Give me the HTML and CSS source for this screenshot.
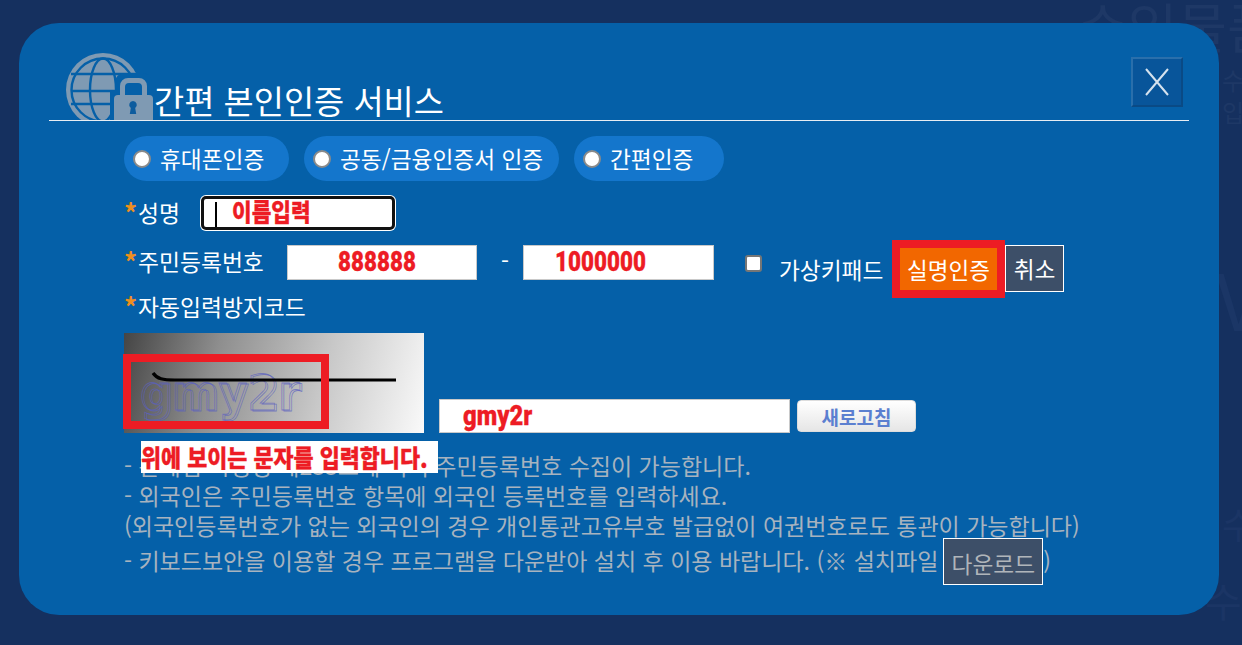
FILE: index.html
```html
<!DOCTYPE html>
<html lang="ko">
<head>
<meta charset="utf-8">
<title>간편 본인인증 서비스</title>
<link rel="stylesheet" href="styles.css">
</head>
<body>
<div class="backdrop" aria-hidden="true">
  <span class="wm wm-top">수입물품</span>
  <span class="wm wm-a">수</span>
  <span class="wm wm-b">입</span>
  <span class="wm wm-v">V</span>
  <span class="wm wm-d">수</span>
  <span class="wm wm-c">수</span>
</div>
<main class="modal">
  <header class="head">
    <svg class="logo" viewBox="0 0 88 67" aria-hidden="true">
      <circle cx="37" cy="37" r="37" fill="#7f9ab3"/>
      <g fill="none" stroke="#0560a8" stroke-width="2.400">
        <circle cx="37" cy="37" r="31.500"/>
        <ellipse cx="37" cy="37" rx="13" ry="31.500"/>
        <path d="M5 21h64M5 38h64M5 51h64"/>
      </g>
      <rect x="49" y="20" width="37" height="30" rx="9" fill="#0560a8"/>
      <rect x="44" y="38" width="47" height="29" fill="#0560a8"/>
      <path d="M54 44V33a8 8 0 0 1 8-8h11a8 8 0 0 1 8 8v11h-5V34a4 4 0 0 0-4-4h-9a4 4 0 0 0-4 4v10z" fill="#7f9ab3"/>
      <path d="M48 46a4 4 0 0 1 4-4h31a4 4 0 0 1 4 4v21H48z" fill="#7f9ab3"/>
      <path d="M67 48a3.800 3.800 0 0 1 2.200 6.900l1 6.100h-6.400l1-6.100A3.800 3.800 0 0 1 67 48z" fill="#0d5c9e"/>
    </svg>
    <h1 class="title">간편 본인인증 서비스</h1>
    <button class="close" type="button" aria-label="닫기">
      <svg viewBox="0 0 26 28" width="26" height="28" aria-hidden="true"><path d="M2 1l22 26M24 1L2 27" fill="none" stroke="#d5e2ee" stroke-width="2"/></svg>
    </button>
  </header>
  <section class="body">
    <div class="methods">
      <label class="pill pill-a"><input class="radio" type="radio" name="m"><span>휴대폰인증</span></label>
      <label class="pill pill-b"><input class="radio" type="radio" name="m"><span>공동/금융인증서 인증</span></label>
      <label class="pill pill-c"><input class="radio" type="radio" name="m"><span>간편인증</span></label>
    </div>
    <div class="row row-name">
      <span class="lab lab-name"><b class="star">*</b>성명</span>
      <div class="namebox"><i class="caret"></i><span class="red red-name">이름입력</span></div>
    </div>
    <div class="row row-id">
      <span class="lab lab-id"><b class="star">*</b>주민등록번호</span>
      <div class="inp inp-id"><span class="red red-num">888888</span></div>
      <span class="dash">-</span>
      <div class="inp inp-id2"><span class="red red-num">1000000</span></div>
      <input class="check" type="checkbox">
      <span class="vk">가상키패드</span>
      <button class="btn btn-ok" type="button">실명인증</button>
      <button class="btn btn-cancel" type="button">취소</button>
    </div>
    <div class="row row-cap"><span class="lab"><b class="star">*</b>자동입력방지코드</span></div>
    <div class="captcha-row">
      <div class="captcha">
        <svg viewBox="0 0 300 100" width="300" height="100" aria-hidden="true">
          <text x="16" y="77" class="captext" textLength="160" lengthAdjust="spacingAndGlyphs">gmy2r</text>
          <text x="18" y="78" class="captext" textLength="160" lengthAdjust="spacingAndGlyphs">gmy2r</text>
          <path d="M29 40c4 6 10 7 22 7L272 47" fill="none" stroke="#000" stroke-width="3.200"/>
        </svg>
        <div class="redbox"></div>
      </div>
      <div class="inp inp-cap"><span class="red red-cap">gmy2r</span></div>
      <button class="refresh" type="button">새로고침</button>
    </div>
    <div class="notes">
      <p class="n1">- 관세법 시행령 제233조에 의거 주민등록번호 수집이 가능합니다.</p>
      <p class="n2">- 외국인은 주민등록번호 항목에 외국인 등록번호를 입력하세요.</p>
      <p class="n3">(외국인등록번호가 없는 외국인의 경우 개인통관고유부호 발급없이 여권번호로도 통관이 가능합니다)</p>
      <p class="n4">- 키보드보안을 이용할 경우 프로그램을 다운받아 설치 후 이용 바랍니다. (※ 설치파일<button class="btn btn-dl" type="button">다운로드</button>)</p>
      <div class="callout"><span class="callout-text">위에 보이는 문자를 입력합니다.</span></div>
    </div>
  </section>
</main>
</body>
</html>
```
FILE: styles.css
```css
* { box-sizing: border-box; }
html, body { margin: 0; height: 100%; }
body {
  position: relative;
  width: 1242px;
  height: 645px;
  overflow: hidden;
  padding: 23px 0 0 19px;
  background: #15305f;
  font-family: "Noto Sans CJK KR", "Noto Sans", sans-serif;
  color: #fff;
}
.backdrop { position: absolute; inset: 0; overflow: hidden; }
.wm { position: absolute; color: #1e3866; line-height: 1; }
.wm-top { left: 1078px; top: -1px; font-size: 54px; white-space: nowrap; }
.wm-a { left: 1222px; top: 68px; font-size: 24px; }
.wm-b { left: 1222px; top: 100px; font-size: 24px; }
.wm-v { left: 1216px; top: 258px; font-size: 78px; color: #1b3666; }
.wm-d { left: 1222px; top: 505px; font-size: 36px; color: #1b3565; }
.wm-c { left: 1205px; top: 580px; font-size: 40px; color: #1b3565; }

.modal {
  position: relative;
  width: 1200px;
  height: 592px;
  border-radius: 40px;
  background: #0560a8;
  padding: 0 30px;
}
.head {
  position: relative;
  display: flex;
  align-items: flex-end;
  height: 98px;
  border-bottom: 1px solid #e8eef4;
  padding-left: 17px;
}
.logo { width: 88px; height: 67px; display: block; flex: none; }
.title {
  margin: 0;
  font-size: 32.800px;
  line-height: 40px;
  font-weight: 400;
  white-space: nowrap;
}
.close {
  position: absolute;
  right: 6px;
  top: 34px;
  width: 52px;
  height: 50px;
  padding: 0;
  display: flex;
  align-items: center;
  justify-content: center;
  background: #08559a;
  border-style: solid;
  border-color: #2a6fab #0a4a85 #0a4a85 #2a6fab;
  border-width: 2px;
}
.body { padding: 15px 0 0 75px; }
.methods { display: flex; gap: 15px; }
.pill {
  display: flex;
  align-items: center;
  height: 45px;
  border-radius: 23px;
  background: #1476cc;
  padding-left: 9px;
  font-size: 22.700px;
}
.pill-a { width: 165px; }
.pill-b { width: 255px; }
.pill-c { width: 150px; }
.radio {
  appearance: none;
  width: 18px;
  height: 18px;
  margin: 0 9px 0 0;
  flex: none;
  border-radius: 50%;
  background: #fff;
  border: 2px solid #8a8a8a;
}
.row { display: flex; align-items: center; font-size: 22.800px; }
.row-name { margin-top: 15px; height: 34px; }
.row-id { margin-top: 10px; height: 58px; }
.row-cap { margin-top: -8px; height: 34px; }
.lab { display: flex; align-items: flex-start; white-space: nowrap; line-height: 30px; }
.lab-name { width: 77px; padding-left: 0; }
.lab-id { width: 163px; margin-bottom: 15px; }
.star { color: #ee8f1e; font-weight: 700; font-size: 26px; line-height: 26px; width: 14px; flex: none; margin-top: 1px; }
.red {
  display: inline-block;
  color: #ed1c24;
  font-family: Roboto, "Noto Sans CJK KR", sans-serif;
  font-weight: 900;
  line-height: 1;
  white-space: nowrap;
  transform-origin: left center;
  -webkit-text-stroke: 0.3px #ed1c24;
}
.red-num { font-size: 27px; transform: scaleX(0.83); }
.red-cap { font-size: 28px; transform: scaleX(0.85); }
.red-name { font-size: 24px; transform: scaleX(0.89); }
.namebox {
  position: relative;
  display: flex;
  align-items: center;
  width: 194px;
  height: 34px;
  border: 3px solid #111;
  border-radius: 5px;
  background: #fff;
  box-shadow: 0 0 0 1px #fff;
  padding-left: 28px;
}
.caret { position: absolute; left: 11px; top: 3px; bottom: 0; width: 2px; background: #000; }
.inp {
  display: flex;
  align-items: center;
  height: 35px;
  background: #fff;
  border: 1px solid #c9c9c9;
  flex: none;
}
.row-id .inp { align-self: flex-start; margin-top: 5px; }
.inp-id { width: 190px; padding-left: 50px; }
.inp-id2 { width: 191px; padding-left: 31px; }
.dash { width: 46px; padding-left: 10px; text-align: center; flex: none; margin-bottom: 18px; }
.check {
  appearance: none;
  width: 17px;
  height: 17px;
  flex: none;
  margin: 0 17px 12px 31px;
  background: #fff;
  border: 2px solid #767676;
  border-radius: 3px;
}
.vk { width: 113px; flex: none; white-space: nowrap; font-size: 22.700px; }
.btn {
  font-family: inherit;
  color: #fff;
  background: #3d4f68;
  border: 1px solid #fff;
  padding: 0;
  white-space: nowrap;
}
.btn-ok {
  width: 113px;
  height: 58px;
  background: #f26700;
  border: 8px solid #ed1c24;
  font-size: 22.500px;
}
.btn-cancel { width: 59px; height: 47px; font-size: 22.700px; align-self: flex-start; margin-top: 5px; }
.captcha-row { display: flex; align-items: flex-end; margin-top: 9px; }
.captcha {
  position: relative;
  width: 300px;
  height: 100px;
  flex: none;
  background: linear-gradient(105deg, #454545 0%, #8e8e8e 30%, #c8c8c8 65%, #fafafa 100%);
}
.captcha svg { display: block; }
.captext {
  font-family: "DejaVu Sans", sans-serif;
  font-size: 50px;
  font-weight: 700;
  fill: none;
  stroke: #5a60c0;
  stroke-width: 0.800;
  stroke-opacity: 0.7;
}
.redbox {
  position: absolute;
  left: -1px;
  top: 21px;
  width: 206px;
  height: 75px;
  border: 8px solid #ed1c24;
}
.inp-cap { width: 351px; height: 34px; margin-left: 15px; padding-left: 23px; }
.refresh {
  width: 119px;
  height: 32px;
  margin: 0 0 1px 7px;
  border: 1px solid #ddd;
  border-radius: 4px;
  background: linear-gradient(#ffffff, #e6e6e6);
  color: #5b7fd0;
  font-family: inherit;
  font-weight: 700;
  font-size: 19px;
  padding: 0;
}
.notes {
  position: relative;
  margin-top: 17px;
  font-size: 23px;
  color: #a7b3bf;
}
.notes p { margin: 0; white-space: nowrap; height: 30px; line-height: 30px; }
.notes .n4 { margin-top: 0; height: 40px; line-height: 40px; display: flex; align-items: center; }
.btn-dl { width: 100px; height: 47px; color: #b0b5ba; font-size: 22.700px; margin: 2px 0 0 5px; padding-top: 4px; flex: none; }
.callout {
  position: absolute;
  left: 17px;
  top: -9px;
  width: 297px;
  height: 32px;
  background: #fff;
  line-height: 32px;
  overflow: hidden;
}
.callout-text {
  display: inline-block;
  color: #ed1c24;
  font-weight: 900;
  font-size: 24px;
  white-space: nowrap;
  transform: scaleX(0.908);
  transform-origin: left center;
  -webkit-text-stroke: 0.3px #ed1c24;
}
```
